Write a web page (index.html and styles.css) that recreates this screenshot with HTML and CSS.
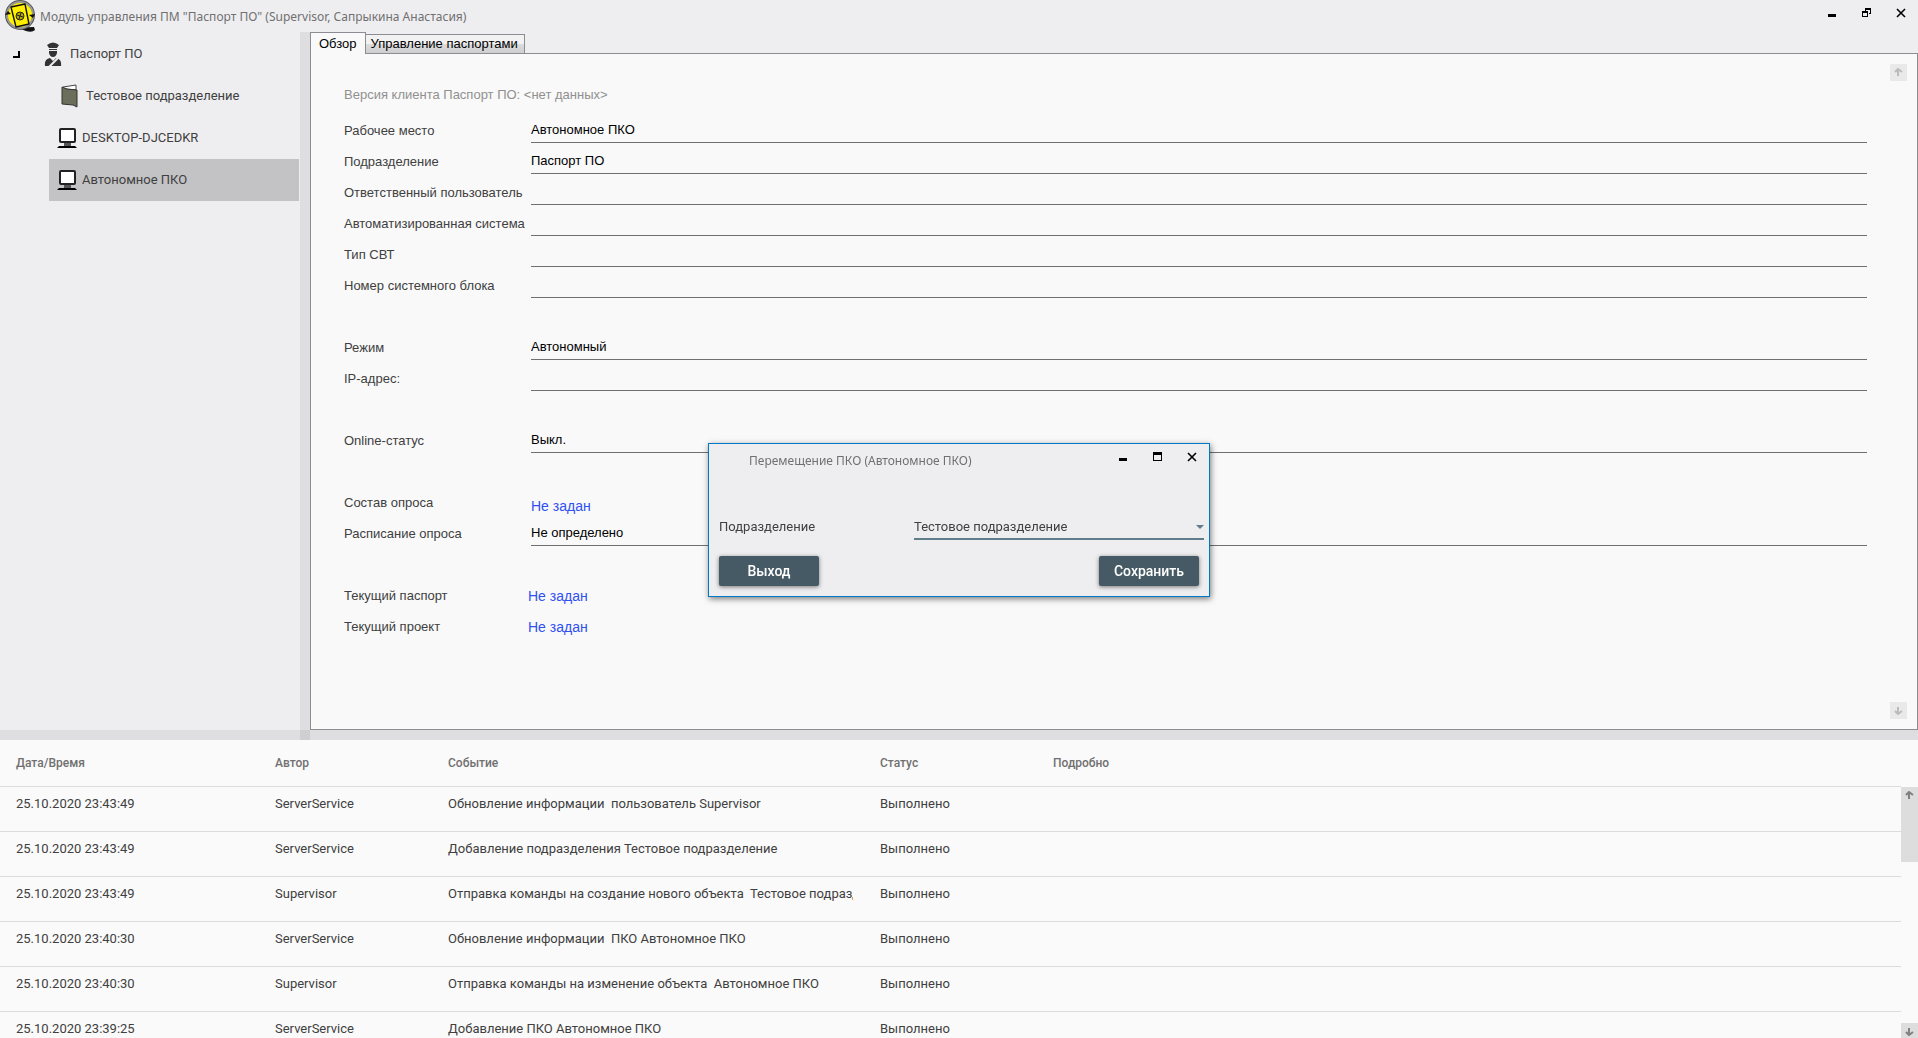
FILE: index.html
```html
<!DOCTYPE html>
<html lang="ru">
<head>
	<meta charset="UTF-8">
	<title>Модуль управления ПМ "Паспорт ПО"</title>
	<link rel="stylesheet" href="styles.css">
</head>
<body>
	<div class="app">
		<header class="titlebar">
			<svg class="logo" width="32" height="32" viewBox="0 0 32 32">
				<path d="M14 28q10-1 16-1l1 3q-3 3-9 1z" fill="#111"/>
				<circle cx="16" cy="15" r="14" fill="#fff200" stroke="#555" stroke-width="2"/>
				<circle cx="16" cy="15" r="13" fill="none" stroke="#999" stroke-width="2"/>
				<path d="M7 7l14-3 4 20-13 3z" fill="#ffee00" stroke="#111" stroke-width="1.4" stroke-linejoin="round"/>
				<circle cx="16" cy="16" r="4" fill="#b5a800" stroke="#222"/>
				<path d="M13 15l6 2M17 13l-2 6" stroke="#222"/>
				<path d="M1 15l3-4 3 3zM31 14l-2 4-4-3z" fill="#111"/>
			</svg>
			<h1>Модуль управления ПМ "Паспорт ПО" (Supervisor, Сапрыкина Анастасия)</h1>
			<div class="winbtns">
				<button type="button" aria-label="Свернуть"><svg width="10" height="10"><path d="M0 6h8v3H0z"/></svg></button>
				<button type="button" aria-label="Восстановить"><svg width="10" height="10"><path d="M3 0h6v6H7V5h1V2H4v1H3zM0 3h6v6H0zM1 5v3h4V5z" fill-rule="evenodd"/></svg></button>
				<button type="button" aria-label="Закрыть"><svg width="10" height="10"><path d="M1 1l8 8M9 1L1 9" stroke="#000" stroke-width="1.6"/></svg></button>
			</div>
		</header>

		<nav class="tree">
			<ul>
				<li class="root">
					<svg class="arrow" width="7" height="7"><path d="M5 0h2v7H0V5h5z"/></svg>
					<svg class="man" width="18" height="24" viewBox="0 0 18 24" fill="#333">
						<path d="M3 3q6-5 12 0l-2 3H5zM5 7h8v1H5zM5 9h8v2q-1 4-4 4t-4-4zM1 24q-1-7 5-8l3 3 3-3q6 1 5 8z"/>
						<path d="M5 25l9-9" stroke="#eeeef0" stroke-width="2"/>
					</svg>
					<span>Паспорт ПО</span>
				</li>
				<li class="dept">
					<svg width="18" height="24" viewBox="0 0 18 24">
						<path d="M2 3l13-2v5L3 5z" fill="#fff" stroke="#444"/>
						<path d="M1 3l5 2 10 1v17l-4-2-11-1z" fill="#6b6e5b" stroke="#333"/>
					</svg>
					<span>Тестовое подразделение</span>
				</li>
				<li class="pc">
					<svg width="20" height="20" viewBox="0 0 20 20">
						<rect x="3" y="1" width="15" height="13" rx="1" fill="#fff" stroke="#222" stroke-width="2"/>
						<path d="M7 15h7v3H7z" fill="#555"/><path d="M2 18h16l2 2H0z"/>
					</svg>
					<span>DESKTOP-DJCEDKR</span>
				</li>
				<li class="pc selected">
					<svg width="20" height="20" viewBox="0 0 20 20">
						<rect x="3" y="1" width="15" height="13" rx="1" fill="#fff" stroke="#222" stroke-width="2"/>
						<path d="M7 15h7v3H7z" fill="#555"/><path d="M2 18h16l2 2H0z"/>
					</svg>
					<span>Автономное ПКО</span>
				</li>
			</ul>
		</nav>
		<div class="vsplit"></div>

		<main class="content">
			<div class="tabs">
				<button type="button" class="tab active">Обзор</button>
				<button type="button" class="tab">Управление паспортами</button>
			</div>
			<div class="panel">
				<form class="form">
					<p class="version">Версия клиента Паспорт ПО: &lt;нет данных&gt;</p>
					<div class="row"><label for="place">Рабочее место</label><input id="place" value="Автономное ПКО" readonly></div>
					<div class="row"><label for="dept">Подразделение</label><input id="dept" value="Паспорт ПО" readonly></div>
					<div class="row"><label for="user">Ответственный пользователь</label><input id="user" readonly></div>
					<div class="row"><label for="sys">Автоматизированная система</label><input id="sys" readonly></div>
					<div class="row"><label for="svt">Тип СВТ</label><input id="svt" readonly></div>
					<div class="row"><label for="num">Номер системного блока</label><input id="num" readonly></div>
					<div class="row gap"><label for="mode">Режим</label><input id="mode" value="Автономный" readonly></div>
					<div class="row"><label for="ip">IP-адрес:</label><input id="ip" readonly></div>
					<div class="row gap"><label for="online">Online-статус</label><input id="online" value="Выкл." readonly></div>
					<div class="row gap poll"><span class="name">Состав опроса</span><a href="#">Не задан</a></div>
					<div class="row"><label for="sched">Расписание опроса</label><input id="sched" value="Не определено" readonly></div>
					<div class="row gap current"><span class="name">Текущий паспорт</span><a href="#">Не задан</a></div>
					<div class="row current"><span class="name">Текущий проект</span><a href="#">Не задан</a></div>
				</form>
				<div class="scroll disabled">
					<button type="button" aria-label="Вверх" disabled><svg width="9" height="9"><path d="M1 4l3-3 4 3M4 1v7"/></svg></button>
					<button type="button" aria-label="Вниз" disabled><svg width="9" height="9"><path d="M1 5l3 3 4-3M4 8V1"/></svg></button>
				</div>
			</div>
		</main>

		<div class="hsplit"><span></span></div>

		<section class="log">
			<table>
				<colgroup><col class="c-date"><col class="c-author"><col class="c-event"><col class="c-status"><col></colgroup>
				<thead>
					<tr><th>Дата/Время</th><th>Автор</th><th>Событие</th><th>Статус</th><th>Подробно</th></tr>
				</thead>
				<tbody>
					<tr><td>25.10.2020 23:43:49</td><td>ServerService</td><td>Обновление информации  пользователь Supervisor</td><td>Выполнено</td><td></td></tr>
					<tr><td>25.10.2020 23:43:49</td><td>ServerService</td><td>Добавление подразделения Тестовое подразделение</td><td>Выполнено</td><td></td></tr>
					<tr><td>25.10.2020 23:43:49</td><td>Supervisor</td><td><div class="clip">Отправка команды на создание нового объекта  Тестовое подразд</div></td><td>Выполнено</td><td></td></tr>
					<tr><td>25.10.2020 23:40:30</td><td>ServerService</td><td>Обновление информации  ПКО Автономное ПКО</td><td>Выполнено</td><td></td></tr>
					<tr><td>25.10.2020 23:40:30</td><td>Supervisor</td><td>Отправка команды на изменение объекта  Автономное ПКО</td><td>Выполнено</td><td></td></tr>
					<tr><td>25.10.2020 23:39:25</td><td>ServerService</td><td>Добавление ПКО Автономное ПКО</td><td>Выполнено</td><td></td></tr>
				</tbody>
			</table>
			<div class="scroll">
				<button type="button" class="thumb" aria-label="Вверх"><svg width="9" height="9"><path d="M1 4l3-3 4 3M4 1v7"/></svg></button>
				<button type="button" aria-label="Вниз"><svg width="9" height="9"><path d="M1 5l3 3 4-3M4 8V1"/></svg></button>
			</div>
		</section>
	</div>

	<div class="overlay">
		<div class="dialog" role="dialog" aria-labelledby="dlg-title">
			<div class="dialog-head">
				<h2 id="dlg-title">Перемещение ПКО (Автономное ПКО)</h2>
				<div class="winbtns">
					<button type="button" aria-label="Свернуть"><svg width="10" height="10"><path d="M0 6h8v3H0z"/></svg></button>
					<button type="button" aria-label="Развернуть"><svg width="10" height="10"><path d="M0 0h9v9H0zM1 3v5h7V3z" fill-rule="evenodd"/></svg></button>
					<button type="button" aria-label="Закрыть"><svg width="10" height="10"><path d="M1 1l8 8M9 1L1 9" stroke="#000" stroke-width="1.6"/></svg></button>
				</div>
			</div>
			<div class="dialog-row">
				<label for="target">Подразделение</label>
				<div class="select">
					<select id="target"><option>Тестовое подразделение</option></select>
					<svg width="8" height="4"><path d="M0 0h8L4 4z"/></svg>
				</div>
			</div>
			<div class="dialog-foot">
				<button type="button" class="btn">Выход</button>
				<button type="button" class="btn">Сохранить</button>
			</div>
		</div>
	</div>
</body>
</html>
```
FILE: styles.css
```css
*{
	margin:0;
	padding:0;
	box-sizing: border-box;
}
body{
	font: 13px/16px Roboto, sans-serif;
	color: #404040;
	background: #eeeef0;
	overflow: hidden;
}
button{
	border:0;
	background: none;
	font: inherit;
}
svg{
	display: block;
	flex: none;
}
.app{
	display: grid;
	grid-template-columns: 300px 10px 1fr;
	grid-template-rows: 32px minmax(0,1fr) 10px 298px;
	height: 100vh;
}

/*title*/
.titlebar{
	grid-column: 1 / -1;
	display: flex;
	align-items: flex-start;
	padding-left: 4px;
}
.titlebar h1,
.dialog h2{
	font: 12px/18px "Noto Sans", sans-serif;
	color: #707070;
}
.titlebar h1{
	padding: 8px 0 0 4px;
}
.winbtns{
	display: flex;
	gap: 24px;
	margin-left: auto;
	padding: 8px 12px 0 0;
}

/*tree*/
.tree ul{
	list-style: none;
	padding-top: 1px;
}
.tree li{
	display: flex;
	align-items: center;
	height: 42px;
	margin: 0 1px 0 49px;
}
.tree .root{
	margin-left: 13px;
}
.arrow{
	margin-right: 24px;
}
.man{
	margin-right: 8px;
}
.dept{
	padding-left: 12px;
	gap: 7px;
}
.pc{
	padding-left: 8px;
	gap: 5px;
}
.selected{
	background: #c3c3c5;
}
.vsplit{
	background: #dedee0;
}

/*tabs*/
.content{
	display: flex;
	flex-direction: column;
	font-family: "Liberation Sans", Arial, sans-serif;
}
.tabs{
	display: flex;
	align-items: flex-end;
	height: 21px;
}
.tab{
	height: 19px;
	padding: 0 6px 0 5px;
	border:1px solid #8c8c93;
	border-left: 0;
	border-bottom: 0;
	background: linear-gradient(#f2f2f2 50%, #dcdcdc 50%, #cfcfcf);
	color: #000;
}
.tab.active{
	z-index: 1;
	height: 22px;
	margin-bottom: -1px;
	padding: 0 8px;
	border-left: 1px solid #8c8c93;
	background: #f9f9f9;
}
.panel{
	flex: 1;
	display: flex;
	border:1px solid #8c8c93;
	background: #f9f9f9;
}
.form{
	flex: 1;
	padding: 33px 13px 0 33px;
}
.version{
	height: 25px;
	color: #909090;
}
.row{
	display: flex;
	height: 31px;
}
.row.gap{
	margin-top: 31px;
}
.row label,
.row .name{
	width: 187px;
	padding-top: 11px;
	white-space: nowrap;
}
.row input{
	flex: 1;
	border:0;
	border-bottom: 1px solid #707070;
	padding-top: 6px;
	background: none;
	font: inherit;
	color: #000;
	outline: 0;
}
.row a{
	padding-top: 11px;
	font-size: 14px;
	color: #3050f0;
	text-decoration: none;
}
.row.poll a{
	padding-top: 14px;
}
.row.current .name{
	width: 184px;
}

/*scrollbars*/
.scroll{
	display: flex;
	flex-direction: column;
	justify-content: space-between;
	width: 17px;
}
.scroll button{
	display: flex;
	justify-content: center;
	align-items: flex-start;
	height: 17px;
	padding-top: 4px;
	background: #dddddd;
}
.scroll path{
	fill: none;
	stroke: #808080;
	stroke-width: 2;
}
.scroll .thumb{
	height: 75px;
}
.scroll.disabled{
	margin: 10px;
}
.scroll.disabled button{
	background: #e9e9e9;
}
.scroll.disabled path{
	stroke: #bbb;
}

.hsplit{
	grid-column: 1 / -1;
	background: #dedee0;
}
.hsplit span{
	display: block;
	width: 10px;
	height: 10px;
	margin-left: 300px;
	background: #cfcfd1;
}

/*log*/
.log{
	grid-column: 1 / -1;
	display: flex;
	align-items: flex-start;
	background: #fafafa;
	overflow: hidden;
}
.log table{
	flex: 1;
	width: 100%;
	table-layout: fixed;
	border-spacing: 0;
}
.c-date{ width: 259px; }
.c-author,
.c-status{ width: 173px; }
.c-event{ width: 432px; }
.log th,
.log td{
	height: 45px;
	padding: 9px 11px 0 16px;
	border-bottom: 1px solid #dcdcdc;
	text-align: left;
	vertical-align: top;
	white-space: pre;
}
.log th{
	height: 47px;
	padding-top: 15px;
	font-size: 12px;
	font-weight: 500;
	color: #707070;
}
.clip{
	overflow: hidden;
}
.log .scroll{
	flex: none;
	align-self: stretch;
	margin-top: 47px;
}
.log .scroll button:last-child{
	height: 15px;
}

/*dialog*/
.overlay{
	position: fixed;
	inset: 0;
	z-index: 2;
	display: flex;
	align-items: center;
	justify-content: center;
	padding-top: 2px;
}
.dialog{
	width: 502px;
	border:1px solid #0078c8;
	background: #eeeef0;
	box-shadow: 1px 2px 6px rgba(0,0,0,.5);
}
.dialog-head{
	display: flex;
	align-items: flex-start;
	height: 72px;
}
.dialog h2{
	padding: 8px 0 0 40px;
}
.dialog-row{
	display: flex;
	padding: 0 5px 0 10px;
}
.dialog-row label{
	width: 195px;
	padding-top: 3px;
}
.select{
	flex: 1;
	display: flex;
	align-items: center;
	height: 24px;
	border-bottom: 2px solid #607d8b;
}
.select select{
	flex: 1;
	appearance: none;
	border:0;
	background: none;
	font: inherit;
	color: #404040;
	outline: 0;
}
.select path{
	fill: #607d8b;
}
.dialog-foot{
	display: flex;
	justify-content: space-between;
	padding: 16px 10px 10px;
}
.btn{
	width: 100px;
	height: 30px;
	border-radius: 2px;
	background: #455a64;
	box-shadow: 0 1px 4px rgba(0,0,0,.5);
	color: #fff;
	font-size: 14px;
	font-weight: 500;
}
```
